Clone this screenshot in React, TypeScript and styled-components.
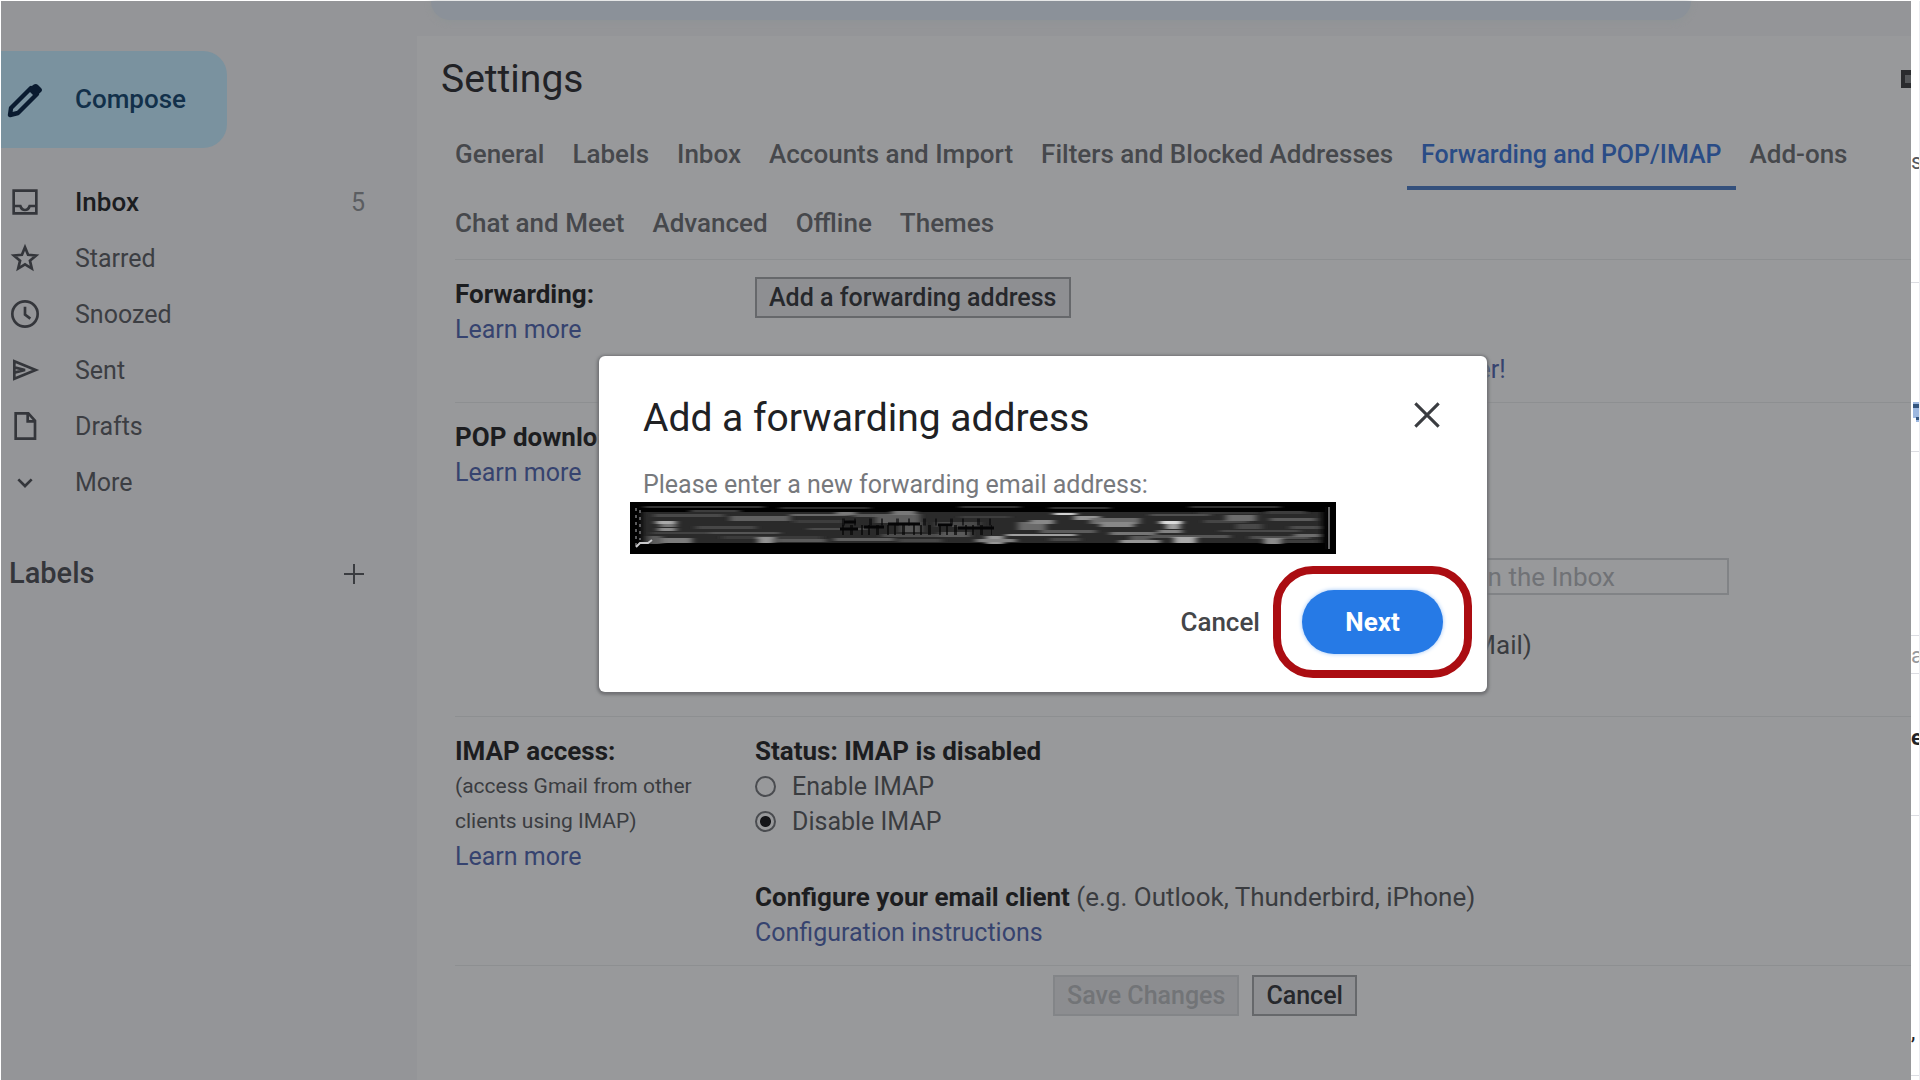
import React from "react";
import styled, { createGlobalStyle, css } from "styled-components";

const GlobalStyle = createGlobalStyle`
  *, *::before, *::after { box-sizing: border-box; }
  body { margin: 0; background: #ffffff; }
  body, button, input, select { font-family: Roboto, "Liberation Sans", sans-serif; }
  h1, h2, h3, p, ul { margin: 0; padding: 0; font-weight: 400; }
`;

const Page = styled.div`
  position: relative;
  display: flex;
  min-height: 100vh;
  padding: 1px 0 0 1px;
  font-size: 25px;
  line-height: 35px;
  color: #3a3c40;
`;

const Mailbox = styled.div`
  flex: 1;
  min-width: 0;
  display: flex;
  flex-direction: column;
  background: #949598;
`;

const TopBar = styled.header`
  height: 35px;
  padding: 0 220px 0 430px;
`;

const SearchEdge = styled.div`
  height: 19px;
  border-radius: 0 0 24px 24px;
  background: #8b9199;
  box-shadow: 0 2px 6px #8f9496;
`;

const Body = styled.div`
  flex: 1;
  display: grid;
  grid-template-columns: 416px minmax(0, 1fr);
`;

/* ---------- sidebar ---------- */

const Sidebar = styled.aside`
  padding-top: 15px;
`;

const Compose = styled.button`
  display: flex;
  align-items: center;
  gap: 32px;
  width: 226px;
  height: 97px;
  padding: 0 0 0 6px;
  border: 0;
  border-radius: 0 24px 24px 0;
  background: #7a929f;
  color: #12304a;
  font-size: 26px;
  font-weight: 500;
  line-height: 35px;
  svg { color: #0a1b30; }
`;

const NavList = styled.ul`
  margin-top: 26px;
  list-style: none;
`;

const NavLink = styled.a<{ $strong?: boolean }>`
  display: flex;
  align-items: center;
  height: 56px;
  padding-left: 8px;
  text-decoration: none;
  color: ${(p) => (p.$strong ? "#1b1d21" : "#3c3e43")};
  font-size: ${(p) => (p.$strong ? "26px" : "25px")};
  font-weight: ${(p) => (p.$strong ? 500 : 400)};
  svg { margin-right: 34px; color: #34363b; }
`;

const Count = styled.span`
  margin: 0 52px 0 auto;
  color: #5b5d61;
  font-size: 25px;
  font-weight: 400;
`;

const LabelsHead = styled.div`
  display: flex;
  align-items: center;
  justify-content: space-between;
  margin-top: 46px;
  padding: 0 51px 0 8px;
  h2 { font-size: 29px; font-weight: 500; color: #34363b; }
`;

const IconButton = styled.button`
  display: flex;
  padding: 0;
  border: 0;
  background: none;
  color: #3a3c40;
`;

/* ---------- settings panel ---------- */

const Panel = styled.main`
  padding: 18px 0 0 24px;
  background: #98999b;
`;

const PanelHead = styled.div`
  display: flex;
  align-items: center;
  justify-content: space-between;
  height: 50px;
  h1 { font-size: 39px; line-height: 50px; color: #212226; }
`;

const Tabs = styled.nav`
  display: flex;
  flex-wrap: wrap;
  margin-top: 17px;
`;

const Tab = styled.a<{ $active?: boolean }>`
  height: 69px;
  padding: 16px 14px 0;
  text-decoration: none;
  font-size: 26px;
  font-weight: 500;
  color: #46484c;
  ${(p) =>
    p.$active &&
    css`
      font-size: 25px;
      color: #2a4c86;
      border-bottom: 4px solid #34507c;
    `}
`;

const Section = styled.section`
  display: grid;
  grid-template-columns: 300px minmax(0, 1fr);
  margin-left: 14px;
  padding: 17px 0 15px;
  border-top: 1px solid #8d8f91;
`;

const Title = styled.h3`
  font-size: 26px;
  font-weight: 700;
  color: #1c1d20;
`;

const Small = styled.p`
  width: 260px;
  font-size: 21px;
`;

const Link = styled.a`
  color: #36436f;
  text-decoration: none;
  font-size: 25px;
`;

const Line = styled.p`
  font-size: 26px;
  white-space: nowrap;
  b { color: #1c1d20; }
`;

const Tip = styled.p`
  margin-top: 34px;
  white-space: nowrap;
  color: #36436f;
`;

const GapLine = styled(Line)`
  margin-top: 41px;
`;

const PopSettings = styled.div`
  display: flex;
  flex-direction: column;
  gap: 34px;
  padding: 139px 0 38px;
`;

const Choice = styled.label`
  display: flex;
  align-items: center;
  gap: 16px;
  height: 35px;
`;

const Radio = styled.input`
  appearance: none;
  width: 21px;
  height: 21px;
  margin: 0;
  border: 2px solid #4a4c50;
  border-radius: 50%;
  &:checked { background: radial-gradient(circle, #141518 0 5px, transparent 6px); }
`;

const GrayButton = styled.button`
  display: block;
  height: 41px;
  padding: 0 12px;
  border: 2px solid #66686b;
  background: #8e8f92;
  color: #26282c;
  font-size: 25px;
  font-weight: 500;
  line-height: 35px;
  &:disabled { border-color: #838588; color: #727477; background: #8c8d90; }
`;

const SelectLine = styled.div`
  display: flex;
  align-items: center;
  gap: 12px;
  height: 35px;
  font-size: 26px;
  white-space: nowrap;
`;

const Picker = styled.select`
  appearance: none;
  width: 470px;
  height: 37px;
  padding: 0 0 0 6px;
  border: 2px solid #818386;
  border-radius: 0;
  background: transparent;
  color: #707276;
  font-size: 26px;
`;

const Actions = styled.div`
  display: flex;
  justify-content: center;
  gap: 13px;
  margin-left: 14px;
  padding: 9px 0 0 44px;
  border-top: 1px solid #8d8f91;
`;

/* ---------- neighbouring column at the window edge ---------- */

const Edge = styled.aside`
  width: 9px;
  overflow: hidden;
  border-right: 1px solid #ececf0;
`;

const EdgeRow = styled.div<{ $h: number; $top: number; $tone?: string }>`
  height: ${(p) => p.$h}px;
  padding-top: ${(p) => p.$top}px;
  overflow: hidden;
  border-bottom: 1px solid #dcdde2;
  font-size: 22px;
  line-height: 22px;
  color: ${(p) => p.$tone ?? "#55575c"};
`;

/* ---------- dialog ---------- */

const Overlay = styled.div`
  position: absolute;
  inset: 0;
  display: flex;
  align-items: center;
  justify-content: center;
  padding: 0 0 32px 166px;
`;

const Dialog = styled.div`
  width: 888px;
  padding: 37px 15px 14px 31px;
  border-radius: 6px;
  background: #ffffff;
  box-shadow: 0 1px 3px 2px #717275;
`;

const DialogHead = styled.div`
  display: flex;
  align-items: center;
  justify-content: space-between;
  padding: 0 31px 0 13px;
  h2 { font-size: 39px; line-height: 50px; color: #202124; }
  button { margin-bottom: 6px; }
`;

const Prompt = styled.label`
  display: block;
  margin-top: 24px;
  padding-left: 13px;
  color: #77797d;
`;

const Redacted = styled.div`
  width: 706px;
  height: 52px;
  background: #000000;
  svg { display: block; width: 100%; height: 100%; }
`;

const DialogActions = styled.div`
  display: flex;
  align-items: center;
  justify-content: flex-end;
  gap: 13px;
  margin-top: 12px;
`;

const TextButton = styled.button`
  padding: 0;
  border: 0;
  background: none;
  color: #444649;
  font-size: 26px;
  font-weight: 500;
  line-height: 35px;
`;

const Ring = styled.span`
  padding: 16px 21px;
  border: 8px solid #ab0d12;
  border-radius: 40px;
`;

const NextButton = styled.button`
  display: block;
  width: 141px;
  height: 64px;
  border: 0;
  border-radius: 32px;
  background: #267ae6;
  box-shadow: 0 0 4px #9cc4f7;
  color: #ffffff;
  font-size: 26px;
  font-weight: 700;
`;

/* ---------- icons ---------- */

const Glyph = ({ d, size = 32, w = 2 }: { d: string; size?: number; w?: number }) => (
  <svg width={size} height={size} viewBox="0 0 24 24" fill="none" stroke="currentColor" strokeWidth={w} aria-hidden="true">
    <path d={d} />
  </svg>
);

const Pencil = () => (
  <svg width="36" height="36" viewBox="0 0 36 36" aria-hidden="true">
    <path d="M4 26 24 6 30 12 11 31 3 33Z" fill="none" stroke="currentColor" strokeWidth="4.4" strokeLinejoin="round" />
    <path d="M21 8 26 3Q29 1 31 3L34 6Q36 8 34 10L28 15Z" fill="currentColor" />
  </svg>
);

const nav = [
  { name: "Inbox", d: "M3.5 3.5h17v17h-17zM3.5 15h5q1 3 3.500 3t3.500-3h5", count: "5", strong: true },
  { name: "Starred", d: "M12 4l2.300 5.600 6 .5-4.600 3.900 1.400 5.900L12 16.800l-5.100 3.100 1.400-5.900-4.600-3.900 6-.5z" },
  { name: "Snoozed", d: "M12 2.500a9.500 9.500 0 1 0 0 19a9.500 9.500 0 1 0 0-19M12 6.500v6l4 3" },
  { name: "Sent", d: "M4 5.500L20 12L4 18.500zM4 10l8 2-8 2" },
  { name: "Drafts", d: "M5 2.500h9.500L19.500 8v13.500H5zM14 3v5.500h5" },
  { name: "More", d: "M7 10l5 5l5-5" },
];

/* Smeared strokes of the covered address: x, y, width, height, grey level */
const streaks: number[][] = [
  [14, 4, 120, 2, 52], [60, 8, 50, 2, 60], [150, 5, 90, 2, 46], [24, 12, 70, 3, 74], [100, 14, 60, 5, 96],
  [26, 19, 20, 3, 170], [30, 22, 16, 3, 120], [28, 26, 18, 3, 140], [22, 30, 90, 2, 66], [30, 36, 32, 5, 124],
  [18, 34, 14, 8, 92], [66, 24, 60, 3, 70], [80, 30, 70, 2, 84], [92, 34, 100, 3, 58], [128, 35, 16, 6, 146],
  [146, 37, 50, 3, 92], [160, 12, 60, 2, 104], [164, 18, 50, 3, 62], [178, 26, 60, 2, 76], [206, 10, 20, 3, 120],
  [224, 12, 40, 3, 88], [246, 12, 44, 9, 94], [262, 9, 24, 4, 120], [270, 20, 22, 10, 86], [252, 32, 60, 3, 78],
  [204, 36, 60, 3, 96], [268, 37, 44, 3, 70], [306, 20, 44, 5, 72], [310, 30, 30, 5, 90], [330, 14, 50, 2, 60],
  [356, 34, 18, 8, 150], [346, 37, 40, 3, 130], [376, 32, 70, 2, 160], [388, 20, 28, 8, 106], [400, 18, 24, 4, 136],
  [424, 11, 22, 2, 210], [444, 14, 26, 4, 150], [460, 16, 50, 6, 110], [470, 20, 34, 5, 136], [410, 28, 56, 3, 92],
  [420, 36, 30, 3, 70], [480, 30, 46, 3, 116], [500, 34, 20, 4, 90], [490, 38, 40, 3, 150], [520, 12, 60, 2, 80],
  [530, 19, 22, 3, 220], [536, 22, 14, 5, 160], [528, 28, 24, 3, 130], [520, 33, 80, 3, 86], [544, 35, 22, 6, 170],
  [568, 10, 60, 2, 56], [574, 18, 44, 3, 68], [596, 13, 30, 6, 110], [606, 22, 26, 5, 74], [590, 28, 80, 2, 72],
  [636, 9, 40, 3, 60], [640, 16, 46, 3, 92], [620, 34, 60, 3, 80], [634, 36, 18, 6, 140], [660, 24, 30, 3, 78],
  [664, 32, 26, 3, 110], [650, 38, 38, 3, 62], [560, 4, 90, 2, 48], [330, 4, 60, 2, 50], [420, 5, 60, 2, 52],
];

const Smear = () => (
  <svg viewBox="0 0 706 52" preserveAspectRatio="none" aria-hidden="true">
    <defs>
      <filter id="soft"><feGaussianBlur stdDeviation="3 .7" /></filter>
    </defs>
    <rect x="12" y="10" width="680" height="31" fill="#2a2a2b" filter="url(#soft)" />
    <g filter="url(#soft)">
      {streaks.map(([x, y, w, h, g], i) => (
        <rect key={i} x={x} y={y} width={w} height={h} fill={`rgb(${g},${g},${g})`} />
      ))}
    </g>
    <path d="M6 6v38M10 8v30" stroke="#77777a" strokeWidth="1.500" strokeDasharray="3 4" fill="none" />
    <path d="M699 5v42" stroke="#88888a" strokeWidth="1.500" fill="none" />
    <path d="M6 45l4-4h8l4-3" stroke="#c8c8ca" strokeWidth="2" fill="none" />
    <g stroke="#050506" fill="none">
      <path d="M210 27h18M214 20h12M234 25h20M258 22h32M308 23h14M328 26h36" strokeWidth="3" />
      <path d="M212 28h150" strokeWidth="10" strokeDasharray="2 6 3 8 2 5" opacity=".7" />
      <path d="M212 20h150" strokeWidth="7" strokeDasharray="3 9 2 13" opacity=".6" />
      <path d="M696 5v42" strokeWidth="2" />
    </g>
  </svg>
);

export default function App() {
  return (
    <>
      <GlobalStyle />
      <Page>
        <Mailbox>
          <TopBar><SearchEdge /></TopBar>
          <Body>
            <Sidebar>
              <Compose type="button"><Pencil />Compose</Compose>
              <NavList>
                {nav.map((n) => (
                  <li key={n.name}>
                    <NavLink href="#" $strong={n.strong}>
                      <Glyph d={n.d} />
                      {n.name}
                      {n.count && <Count>{n.count}</Count>}
                    </NavLink>
                  </li>
                ))}
              </NavList>
              <LabelsHead>
                <h2>Labels</h2>
                <IconButton type="button" aria-label="Create label"><Glyph d="M12 2v20M2 12h20" size={24} /></IconButton>
              </LabelsHead>
            </Sidebar>

            <Panel>
              <PanelHead>
                <h1>Settings</h1>
                <svg width="10" height="18" viewBox="0 0 10 18" aria-hidden="true">
                  <rect width="10" height="18" fill="#2a2b2e" />
                  <rect x="4" y="5" width="6" height="8" fill="#55575a" />
                </svg>
              </PanelHead>
              <Tabs>
                <Tab href="#">General</Tab>
                <Tab href="#">Labels</Tab>
                <Tab href="#">Inbox</Tab>
                <Tab href="#">Accounts and Import</Tab>
                <Tab href="#">Filters and Blocked Addresses</Tab>
                <Tab href="#" $active>Forwarding and POP/IMAP</Tab>
                <Tab href="#">Add-ons</Tab>
                <Tab href="#">Chat and Meet</Tab>
                <Tab href="#">Advanced</Tab>
                <Tab href="#">Offline</Tab>
                <Tab href="#">Themes</Tab>
              </Tabs>

              <Section>
                <div>
                  <Title>Forwarding:</Title>
                  <Link href="#">Learn more</Link>
                </div>
                <div>
                  <GrayButton type="button">Add a forwarding address</GrayButton>
                  <Tip>Tip: You can also forward only some of your mail by creating a filter!</Tip>
                </div>
              </Section>

              <Section>
                <div>
                  <Title>POP download:</Title>
                  <Link href="#">Learn more</Link>
                </div>
                <PopSettings>
                  <SelectLine>
                    <label htmlFor="pop-copy"><b>2.</b> When messages are accessed with POP</label>
                    <Picker id="pop-copy"><option>keep Gmail's copy in the Inbox</option></Picker>
                  </SelectLine>
                  <Line><b>3. Configure your email client</b> (e.g. Outlook, Eudora, Netscape Mail)</Line>
                </PopSettings>
              </Section>

              <Section>
                <div>
                  <Title>IMAP access:</Title>
                  <Small>(access Gmail from other clients using IMAP)</Small>
                  <Link href="#">Learn more</Link>
                </div>
                <div>
                  <Title>Status: IMAP is disabled</Title>
                  <Choice><Radio type="radio" name="imap" />Enable IMAP</Choice>
                  <Choice><Radio type="radio" name="imap" defaultChecked />Disable IMAP</Choice>
                  <GapLine><b>Configure your email client</b> (e.g. Outlook, Thunderbird, iPhone)</GapLine>
                  <Link href="#">Configuration instructions</Link>
                </div>
              </Section>

              <Actions>
                <GrayButton type="button" disabled>Save Changes</GrayButton>
                <GrayButton type="button">Cancel</GrayButton>
              </Actions>
            </Panel>
          </Body>
        </Mailbox>

        <Edge>
          <EdgeRow $h={282} $top={150}>s</EdgeRow>
          <EdgeRow $h={169} $top={119}>
            <svg width="8" height="20" viewBox="0 0 8 20" aria-hidden="true">
              <path d="M2 0h6v20H5v-4H2z" fill="#9db8e0" />
              <path d="M2 2h6v4H2zM5 15h3v3H5z" fill="#34557f" />
            </svg>
          </EdgeRow>
          <EdgeRow $h={184} $top={0} />
          <EdgeRow $h={38} $top={9} $tone="#97999d">a</EdgeRow>
          <EdgeRow $h={142} $top={53} $tone="#222327"><b>e</b></EdgeRow>
          <EdgeRow $h={260} $top={205} $tone="#222327">,</EdgeRow>
        </Edge>

        <Overlay>
          <Dialog role="dialog" aria-labelledby="dialog-title">
            <DialogHead>
              <h2 id="dialog-title">Add a forwarding address</h2>
              <IconButton type="button" aria-label="Close"><Glyph d="M2 2l20 20M22 2L2 22" size={28} w={2.6} /></IconButton>
            </DialogHead>
            <Prompt>Please enter a new forwarding email address:</Prompt>
            <Redacted><Smear /></Redacted>
            <DialogActions>
              <TextButton type="button">Cancel</TextButton>
              <Ring><NextButton type="button">Next</NextButton></Ring>
            </DialogActions>
          </Dialog>
        </Overlay>
      </Page>
    </>
  );
}
